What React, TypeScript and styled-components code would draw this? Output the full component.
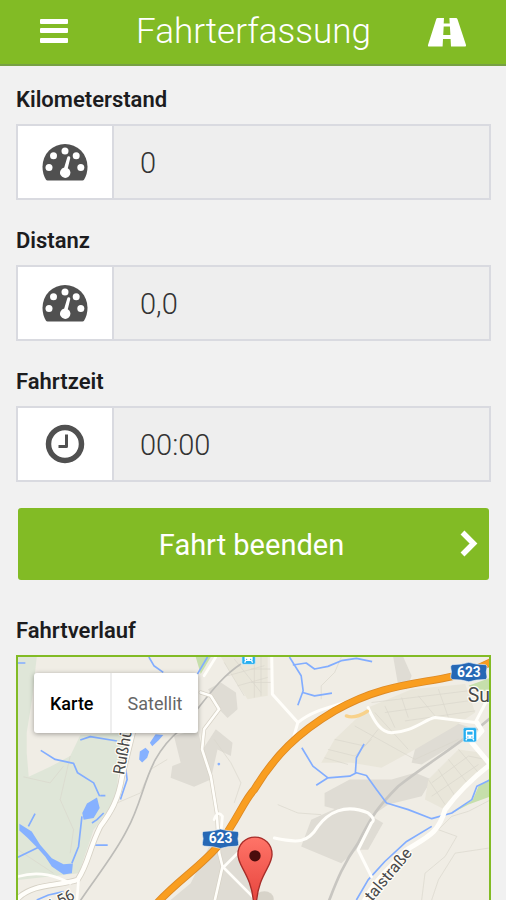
import React from "react";
import styled, { createGlobalStyle } from "styled-components";

const GREEN = "#82bb25";

const GlobalStyle = createGlobalStyle`
  *, *::before, *::after { box-sizing: border-box; }
  body { margin: 0; background: #f1f1f1; font-family: Roboto, "Liberation Sans", sans-serif; }
`;

const Page = styled.div`
  display: flex;
  flex-direction: column;
  height: 100vh;
  overflow: hidden;
`;

const Header = styled.header`
  display: flex;
  flex: none;
  align-items: center;
  justify-content: space-between;
  height: 66px;
  padding: 0 37px 0 32px;
  background: ${GREEN};
  border-bottom: 2px solid #77a044;
`;

const Title = styled.h1`
  margin: 0;
  padding-left: 6px;
  color: #fff;
  font-size: 35px;
  line-height: 40px;
  font-weight: 300;
`;

const IconButton = styled.button`
  display: flex;
  align-items: center;
  justify-content: center;
  width: 44px;
  height: 44px;
  padding: 0;
  border: 0;
  background: none;
  color: #fff;
  cursor: pointer;
`;

const Content = styled.main`
  display: flex;
  flex: 1;
  flex-direction: column;
  min-height: 0;
  padding: 18px 15px 0 16px;
`;

const Field = styled.div`
  flex: none;
  margin-bottom: 25px;
`;

const Label = styled.label`
  display: block;
  margin-bottom: 8px;
  color: #1c1c1e;
  font-size: 22px;
  line-height: 32px;
  font-weight: 600;
`;

const SectionTitle = styled(Label).attrs({ as: "h2" })`
  flex: none;
  margin-top: 35px;
`;

const InputGroup = styled.div`
  display: flex;
  height: 76px;
  border: 2px solid #d9dae0;
`;

const Addon = styled.span`
  display: flex;
  flex: none;
  align-items: center;
  justify-content: center;
  width: 96px;
  border-right: 2px solid #d9dae0;
  background: #fff;
  color: #505050;
`;

const TextInput = styled.input`
  flex: 1;
  min-width: 0;
  padding: 2px 26px 0;
  border: 0;
  border-radius: 0;
  outline: 0;
  background: #eeeeee;
  color: #333;
  font: 300 29px Roboto, "Liberation Sans", sans-serif;
`;

const PrimaryButton = styled.button`
  display: grid;
  flex: none;
  grid-template-columns: 28px 1fr 32px;
  align-items: center;
  justify-items: center;
  height: 72px;
  margin: 1px 2px 0;
  padding: 2px 4px 0;
  border: 0;
  border-radius: 3px;
  background: ${GREEN};
  color: #fff;
  font: 400 29px Roboto, "Liberation Sans", sans-serif;
  cursor: pointer;
  span { grid-column: 2; }
`;

const MapFrame = styled.section`
  position: relative;
  flex: 1;
  min-height: 0;
  overflow: hidden;
  border: 2px solid ${GREEN};
  border-bottom: 0;
  background: #f0ede5;
`;

const MapCanvas = styled.svg`
  display: block;
  width: 100%;
  height: 100%;
`;

const MapTypes = styled.div`
  position: absolute;
  top: 16px;
  left: 16px;
  display: flex;
  height: 60px;
  border-radius: 3px;
  background: #fff;
  box-shadow: 0 1px 5px rgba(0, 0, 0, 0.35);
`;

const MapType = styled.button<{ $active?: boolean }>`
  padding: 0 16px;
  border: 0;
  background: none;
  color: ${(p) => (p.$active ? "#000" : "#666")};
  font: ${(p) => (p.$active ? 500 : 400)} 18px Roboto, "Liberation Sans", sans-serif;
  cursor: pointer;
  & + & { border-left: 2px solid #eee; }
`;

const MenuIcon = () => (
  <svg width="28" height="26" viewBox="0 0 28 26" fill="currentColor" aria-hidden="true">
    <rect y="0" width="28" height="5" rx="1" />
    <rect y="9" width="28" height="5" rx="1" />
    <rect y="19" width="28" height="5" rx="1" />
  </svg>
);

const RoadIcon = () => (
  <svg width="40" height="30" viewBox="0 0 40 30" aria-hidden="true">
    <path fill="currentColor" fillRule="evenodd" d="M10.5 1H17L16.700 6.500H22.700L22.400 1H29Q30 1 30.500 2.200L39 28Q39.400 29.500 38 29.500H24L23.600 22H16L15.600 29.500H1.800Q.5 29.500 1 28L9.200 2.200Q9.600 1 10.500 1ZM16.700 9.500L16.200 18H23.400L22.900 9.500Z" />
  </svg>
);

const GaugeIcon = () => (
  <svg width="46" height="38" viewBox="0 0 46 38" aria-hidden="true">
    <path fill="currentColor" d="M5.500 37.500Q4.500 37.500 4 36.700Q.5 31 .5 23.500A22.500 22.500 0 0 1 45.500 23.500Q45.500 31 42 36.700Q41.500 37.500 40.500 37.500Z" />
    <g fill="#fff">
      <circle cx="7" cy="24.500" r="3.500" />
      <circle cx="11.500" cy="12.800" r="3.500" />
      <circle cx="23" cy="8" r="3.500" />
      <circle cx="34.200" cy="12.800" r="3.500" />
      <circle cx="38.800" cy="24.500" r="3.500" />
      <path d="M25.200 14.500Q25.600 13 27 13.300Q28.500 13.600 28.200 15.200L25.800 25.200A5.200 5.200 0 1 1 22.200 24.600Z" />
    </g>
  </svg>
);

const ClockIcon = () => (
  <svg width="40" height="40" viewBox="0 0 40 40" fill="none" stroke="currentColor" aria-hidden="true">
    <circle cx="20" cy="20" r="16.500" strokeWidth="5.500" />
    <path d="M21.500 10.500V22.500H13.500" strokeWidth="3" strokeLinejoin="round" />
  </svg>
);

const ChevronIcon = () => (
  <svg width="20" height="30" viewBox="0 0 20 30" fill="none" stroke="currentColor" strokeWidth="5.500" aria-hidden="true">
    <path d="M3.500 2.500L14.500 13.500L3.500 24.500" />
  </svg>
);

const Shield = ({ x, y }: { x: number; y: number }) => (
  <g transform={`translate(${x} ${y})`}>
    <path d="M-50 -22L-22 -24L0 -29L22 -24L50 -22Q56 -19 54 -12L52 0L54 12Q56 19 50 22L22 24L0 29L-22 24L-50 22Q-56 19 -54 12L-52 0L-54 -12Q-56 -19 -50 -22Z" fill="#2668b5" stroke="#e7eef5" strokeWidth="2" />
    <text y="14" textAnchor="middle" fill="#fff" fontSize="41" fontWeight="700">623</text>
  </g>
);

const Station = ({ x, y }: { x: number; y: number }) => (
  <g transform={`translate(${x} ${y})`}>
    <rect x="-20" y="-22" width="40" height="43" rx="5" fill="#26aef0" stroke="#d9eef8" strokeWidth="2" />
    <rect x="-12" y="-15" width="24" height="26" rx="4" fill="#fff" />
    <rect x="-8" y="-10" width="16" height="9" fill="#26aef0" />
    <path d="M-9 11L-12 16M9 11L12 16" stroke="#fff" strokeWidth="4" />
    <circle cx="-6" cy="6" r="2" fill="#26aef0" />
    <circle cx="6" cy="6" r="2" fill="#26aef0" />
  </g>
);

const RouteMap = () => (
  <MapCanvas viewBox="54 24 1413 726" preserveAspectRatio="xMinYMin slice" role="img" aria-label="Fahrtverlauf">
    <defs>
      <linearGradient id="pin" x1="0" y1="0" x2="0" y2="1">
        <stop offset="0" stopColor="#ff7468" />
        <stop offset="1" stopColor="#e6443d" />
      </linearGradient>
    </defs>
    <rect x="54" y="24" width="1413" height="1200" fill="#f0ede5" />

    <g fill="#dfe6d8">
      <path d="M54 24H110L96 150L80 250V310L86 382L150 352L210 320L240 258L380 250L352 380L350 445L280 540L236 670L54 690Z" />
      <path d="M585 24H630L600 75Z" fill="#c6dfab" />
      <path d="M1400 110L1467 85V125H1430ZM1340 496L1412 452L1430 410L1467 385V440L1400 465Z" fill="#c6dfab" />
    </g>

    <g fill="#dfdcd4">
      <path d="M622 120L660 100L705 130L710 180L680 206L655 180ZM520 260L590 240L606 300L645 240L695 280L690 320L650 300L630 390L580 412L510 385L515 350L540 340Z" />
      <path d="M640 560L745 600L760 750H510L570 700Z" />
      <path d="M970 430L1045 390L1170 390L1240 370L1290 390L1260 440L1160 465L1110 500L1145 520L1100 600L1065 600L1020 640L900 590L930 510L1000 478L970 470Z" />
      <path d="M1240 300L1290 250L1360 220L1420 240L1350 290L1260 345L1230 340ZM1175 24H1205L1230 80L1215 120L1190 110Z" />
    </g>
    <g fill="#e9e6da">
      <path d="M660 24H800V140L740 150L700 90ZM960 340L1000 270L1100 175L1230 120L1390 105L1420 190L1360 230L1240 300L1140 355L1050 340Z" />
      <path d="M1280 390L1370 300L1440 310L1460 350L1330 480L1270 450Z" />
    </g>

    <g fill="none" stroke="#dad6cc" strokeWidth="2">
      <path d="M210 320L180 450L220 540L210 610M70 382L150 400L190 350M54 600L160 670M780 390L720 470L680 540M350 460L420 430L450 360L500 330M640 270L690 340L720 400L700 460" />
      <path d="M830 465L890 490L960 495M1467 450L1400 485L1350 500L1310 540L1365 560L1330 620L1270 670L1260 750M1460 595L1360 610L1310 690L1290 750M1020 24L1000 70L960 110V150" />
      <path d="M1000 270L1090 290L1130 240M980 300L1060 320L1110 270M970 325L1040 345M1060 230L1240 330L1370 270M1120 190L1220 300M1150 170L1180 235M1200 145L1220 205M1250 140L1300 200M1310 120L1340 205M1110 160L1400 125M1150 190L1400 155M1210 215L1420 185" />
      <path d="M1280 390L1330 465M1310 360L1360 440M1340 330L1400 405M1370 300L1430 370M1290 400L1400 320L1450 330M1290 440L1430 345M670 40L730 140M700 30L780 130M680 80L790 50M710 110L800 85M760 24V145M780 24V140M750 60H810M750 100H810" />
    </g>

    <g fill="none" stroke="#bdbcb8" strokeWidth="5">
      <path d="M720 45C650 90 610 160 540 240C430 330 440 430 380 540C340 620 280 690 235 760" />
      <path d="M1467 205C1380 280 1280 340 1190 410C1130 470 1110 500 1070 580C1020 650 1000 710 980 760" strokeWidth="8" stroke="#c8c6c1" />
    </g>

    <g fill="none" stroke="#82adff" strokeWidth="5" strokeLinejoin="round">
      <path d="M54 42H76M445 24L460 50L488 70M620 24L590 75M122 303L165 330L220 342L232 370L280 400L298 440M240 272L270 262L350 275M105 492L85 530M54 622L120 590M375 350L380 390L360 450M275 520L290 510L310 490M280 586H322M245 500L235 590L215 640M110 750L145 735L190 725M300 438H315" />
      <path d="M865 24L900 80L906 125L890 168M875 48L915 42L940 60L980 52L1020 35L1065 28L1112 38M905 130L940 140L992 132M902 295L935 350L980 385L1045 380L1065 370L1095 378L1125 420L1155 460L1220 480L1290 507L1350 490L1410 450L1425 410L1467 390M1088 284L1065 325L1062 370M945 407L980 385" />
      <path d="M1065 750L1100 690L1150 635L1215 575L1290 530" />
    </g>
    <g fill="#86b1ff">
      <path d="M418 306L435 295L446 306L440 325L425 339L416 330ZM448 280L465 255L488 257L475 272L455 291ZM260 462L290 444L298 475L280 505L250 510L246 490Z" />
      <path d="M58 522L95 545L120 585L155 625L190 643L218 641L215 670L190 674L155 650L135 620L108 590L83 565L58 542Z" />
      <circle cx="654" cy="344" r="4" />
    </g>

    <g fill="none" strokeLinecap="round" strokeLinejoin="round">
      <g stroke="#d6d1c5">
        <path d="M412 190L365 380C355 450 330 490 300 530C265 600 265 640 232 690C170 710 100 700 54 745" strokeWidth="18" />
        <path d="M600 130L630 140L655 180L610 240L604 300L630 380L648 490L655 610L665 650L640 760" strokeWidth="12" />
      </g>
      <g stroke="#fffefa">
        <path d="M412 190L365 380C355 450 330 490 300 530C265 600 265 640 232 690C170 710 100 700 54 745" strokeWidth="13" />
        <path d="M645 24L610 80M54 680C120 660 170 680 210 700M235 690L230 750" strokeWidth="8" />
        <path d="M600 130L630 140L655 180L610 240L604 300L630 380L648 490L655 610L665 650L640 760M665 650L760 745M670 650L710 610M640 510Q650 480 665 500L660 550" strokeWidth="8" />
        <path d="M812 24L814 135L890 220L870 290M890 220C950 170 1030 170 1090 135M1100 175C1120 220 1140 250 1170 250C1230 250 1270 210 1300 205L1420 220L1467 130M820 565C890 580 920 580 950 530C980 490 1030 460 1100 490Q1125 510 1110 520L1070 600L1110 680" strokeWidth="9" />
        <path d="M1425 220L1440 245L1410 280L1465 345C1400 395 1360 440 1330 480C1310 550 1280 560 1215 600C1170 650 1120 690 1090 750" strokeWidth="15" />
      </g>
      <path d="M1035 200Q1060 210 1098 186" stroke="#f8d28b" strokeWidth="10" />
      <g strokeLinecap="butt">
        <path d="M460 770C520 700 600 650 650 590C710 510 730 450 760 420C820 320 890 250 1000 185C1140 105 1250 105 1350 82Q1420 65 1480 32" stroke="#dc8925" strokeWidth="23" />
        <path d="M460 770C520 700 600 650 650 590C710 510 730 450 760 420C820 320 890 250 1000 185C1140 105 1250 105 1350 82Q1420 65 1480 32" stroke="#f99e20" strokeWidth="18" />
      </g>
    </g>

    <g fill="#494949" stroke="#fffdf7" strokeWidth="7" paintOrder="stroke" fontFamily="Roboto, sans-serif">
      <text transform="translate(371 377) rotate(-80)" fontSize="48">Rußhü</text>
      <text transform="translate(1112 756) rotate(-50)" fontSize="48">talstraße</text>
      <text transform="translate(158 780) rotate(-27)" fontSize="46">L56</text>
      <text x="1398" y="158" fontSize="58">Su</text>
    </g>
    <Shield x={659} y={567} />
    <Shield x={1401} y={69} />
    <Station x={743} y={25} />
    <Station x={1404} y={257} />

    <ellipse cx="790" cy="746" rx="28" ry="22" fill="#bdb9ae" opacity=".5" />
    <path d="M762 562C791 562 813 584 813 614C813 650 772 675 766 760H758C752 675 711 650 711 614C711 584 733 562 762 562Z" fill="url(#pin)" stroke="#a72d29" strokeWidth="4" />
    <circle cx="762" cy="618" r="17" fill="#4b0d0d" />
  </MapCanvas>
);

const fields = [
  { id: "odometer", label: "Kilometerstand", value: "0", Icon: GaugeIcon },
  { id: "distance", label: "Distanz", value: "0,0", Icon: GaugeIcon },
  { id: "duration", label: "Fahrtzeit", value: "00:00", Icon: ClockIcon },
];

export default function App() {
  return (
    <Page>
      <GlobalStyle />
      <Header>
        <IconButton type="button" aria-label="Menü"><MenuIcon /></IconButton>
        <Title>Fahrterfassung</Title>
        <IconButton type="button" aria-label="Fahrt"><RoadIcon /></IconButton>
      </Header>
      <Content>
        {fields.map(({ id, label, value, Icon }) => (
          <Field key={id}>
            <Label htmlFor={id}>{label}</Label>
            <InputGroup>
              <Addon><Icon /></Addon>
              <TextInput id={id} value={value} readOnly />
            </InputGroup>
          </Field>
        ))}
        <PrimaryButton type="button"><span>Fahrt beenden</span><ChevronIcon /></PrimaryButton>
        <SectionTitle>Fahrtverlauf</SectionTitle>
        <MapFrame>
          <RouteMap />
          <MapTypes>
            <MapType type="button" $active>Karte</MapType>
            <MapType type="button">Satellit</MapType>
          </MapTypes>
        </MapFrame>
      </Content>
    </Page>
  );
}
